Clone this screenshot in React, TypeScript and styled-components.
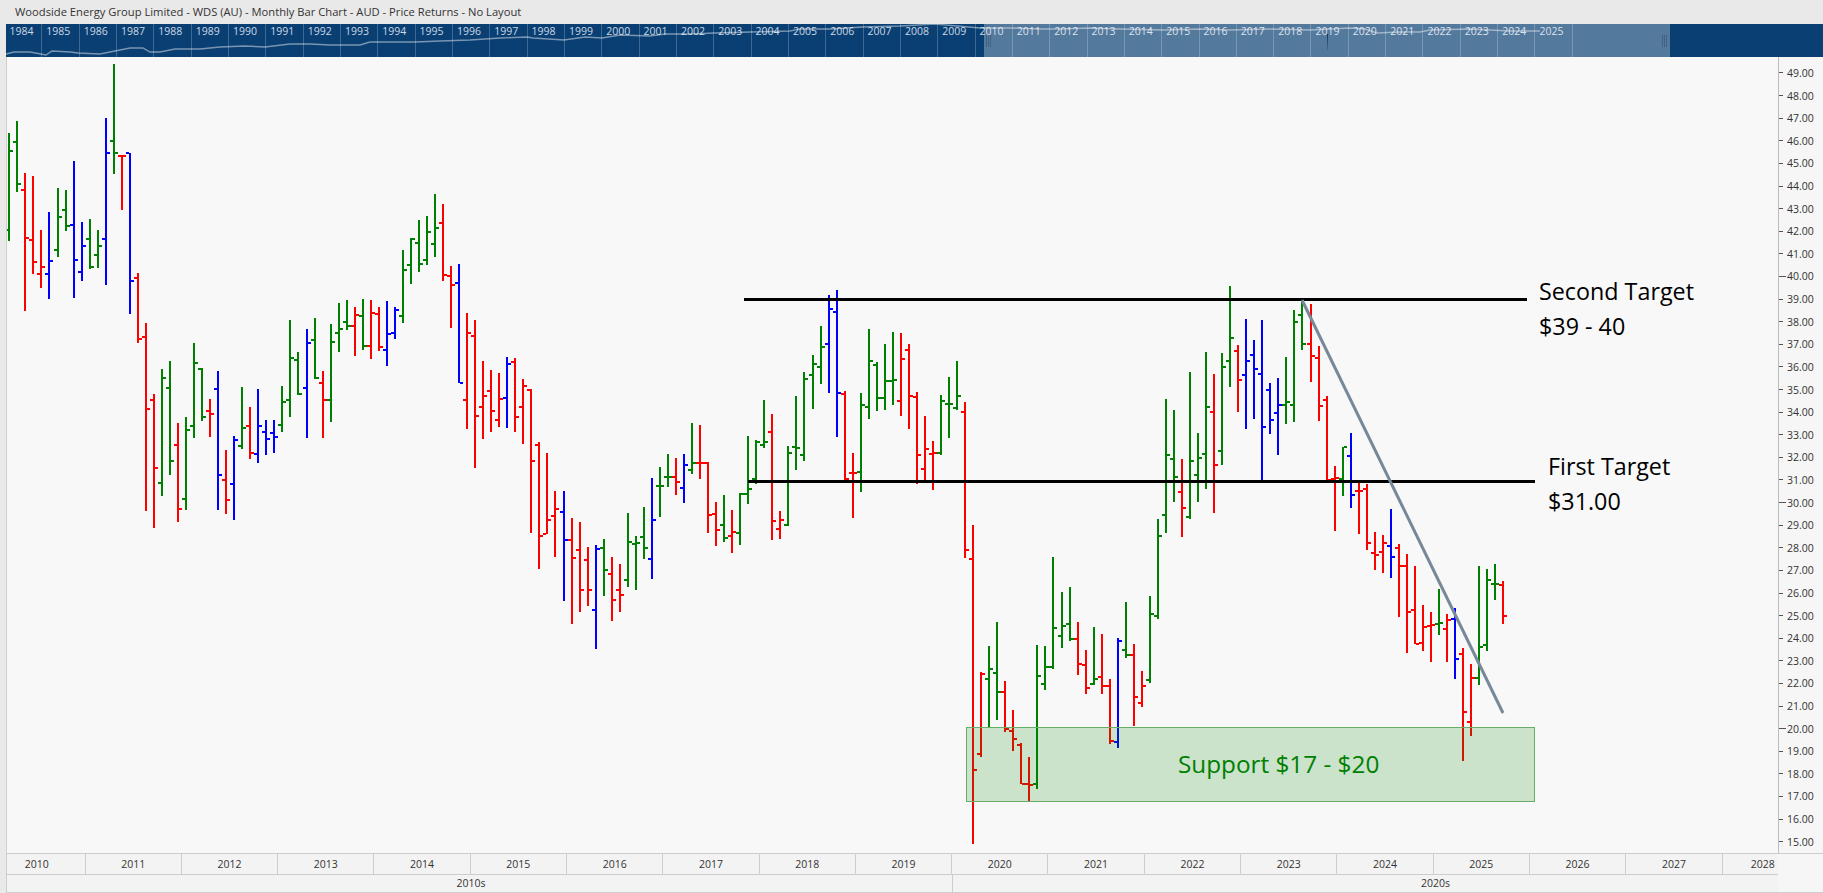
import React from "react";
import styled, { createGlobalStyle } from "styled-components";

// --- Data ---

type Bar = [color: "g" | "r" | "b", high: number, low: number, open: number, close: number];

// all y values are pixel rows of the page, one bar per month from March 2010
const BARS: Bar[] = [
  ["g",133,241,230,151],["g",121,192,142,184],["r",173,311,190,238],["r",176,274,240,262],["r",230,288,274,267],
  ["b",212,299,274,261],["g",188,257,250,217],["g",190,231,210,226],["b",161,298,225,260],["b",222,281,272,246],
  ["g",219,269,239,267],["g",230,268,255,246],["b",118,285,239,153],["g",64,174,141,153],["r",155,210,156,156],
  ["b",153,314,153,281],["r",273,343,278,339],["r",323,511,337,409],["r",394,528,400,468],["g",369,496,483,378],
  ["g",361,475,388,461],["r",423,522,445,509],["g",417,510,499,430],["g",343,438,426,363],["g",368,421,369,417],
  ["r",399,437,411,414],["b",371,510,389,475],["r",450,514,480,500],["b",436,520,484,440],["g",387,449,446,428],
  ["r",407,459,426,453],["b",389,463,454,426],["b",420,455,432,439],["b",420,453,433,437],["g",386,432,425,402],
  ["g",320,417,400,358],["g",352,395,360,394],["b",329,438,388,343],["g",318,379,340,378],["r",371,438,383,400],
  ["g",324,422,400,342],["g",303,352,333,329],["g",300,330,322,326],["r",307,356,326,315],["g",299,350,316,346],
  ["r",300,359,346,313],["r",307,351,314,347],["b",301,366,350,334],["b",307,339,333,310],["g",250,323,316,270],
  ["g",238,284,265,239],["g",220,272,243,264],["g",216,265,260,232],["g",194,257,244,228],["r",204,281,223,275],
  ["r",266,328,276,285],["b",264,383,283,383],["r",313,429,400,333],["r",320,468,336,416],["r",361,439,407,396],
  ["r",370,432,391,411],["r",373,427,420,399],["b",357,428,398,364],["r",358,432,362,417],["r",379,444,407,386],
  ["r",389,533,390,461],["r",442,569,445,536],["r",453,534,534,520],["r",491,557,516,509],["b",491,601,512,540],
  ["r",518,624,540,558],["r",522,612,550,590],["r",547,606,560,590],["b",545,649,610,549],["g",539,596,548,570],
  ["r",557,621,574,600],["r",564,612,590,595],["g",513,587,580,542],["g",536,590,544,543],["g",507,559,537,548],
  ["b",478,579,559,520],["g",467,517,486,486],["g",454,487,477,477],["r",458,495,477,482],["b",454,503,488,465],
  ["g",423,474,470,463],["r",425,479,463,463],["r",462,533,463,515],["r",502,546,514,530],["g",495,542,525,538],
  ["r",510,553,536,532],["g",493,545,533,494],["g",436,504,494,489],["g",440,484,479,442],["g",400,448,445,442],
  ["r",414,540,432,521],["r",511,539,529,520],["g",446,526,525,453],["g",396,470,447,448],["g",372,461,455,379],
  ["g",355,409,375,364],["g",326,384,367,347],["b",295,393,344,309],["b",290,437,312,393],["r",391,480,394,479],
  ["r",453,518,473,473],["g",393,492,472,405],["g",329,419,407,361],["g",362,411,365,398],["g",344,410,398,381],
  ["g",332,405,381,380],["r",333,416,401,359],["r",344,429,350,396],["r",392,484,397,455],["r",416,481,469,449],
  ["r",441,490,454,453],["g",395,455,453,401],["g",377,438,404,404],["g",361,410,408,396],["r",402,558,412,550],
  ["r",525,844,559,770],["r",672,757,754,674],["g",646,727,679,669],["g",622,720,673,692],["r",681,732,692,729],
  ["r",710,751,731,739],["r",743,784,745,784],["r",757,802,784,785],["g",645,789,784,676],["g",646,690,684,667],
  ["g",557,669,667,628],["g",592,648,636,626],["g",587,641,624,639],["r",622,675,639,664],["r",650,694,665,688],
  ["g",627,685,684,679],["r",634,694,677,686],["r",679,744,686,741],["b",638,748,742,641],["g",602,658,650,655],
  ["r",644,726,655,697],["r",671,707,703,686],["g",596,683,680,614],["g",519,619,616,536],["g",399,533,515,455],
  ["g",410,502,459,477],["r",459,537,492,508],["g",372,519,517,461],["g",433,502,475,458],["g",352,489,454,407],
  ["r",374,513,412,465],["g",353,465,451,367],["g",286,387,361,338],["r",345,412,351,380],["b",319,429,375,361],
  ["b",340,419,355,369],["b",320,480,374,427],["b",383,434,390,420],["b",378,455,413,405],["g",357,424,405,402],
  ["g",310,422,405,322],["g",301,350,315,344],["r",304,382,344,356],["r",346,421,358,406],["r",396,483,400,480],
  ["r",466,531,479,478],["g",447,496,479,447],["b",433,508,456,495],["r",483,534,491,491],["r",484,550,489,543],
  ["r",532,570,553,555],["r",535,573,552,543],["b",509,578,546,557],["r",544,617,548,566],["r",554,653,566,612],
  ["r",566,644,610,644],["r",605,651,643,627],["r",612,662,626,625],["g",589,635,624,623],["r",614,662,629,620],
  ["b",608,679,619,659],["r",648,761,654,712],["r",664,736,722,678],["g",566,685,678,647],["g",569,651,645,580],
  ["g",564,600,584,584],["r",581,624,585,616],
];

const COLORS = { g: "#008000", r: "#ff0000", b: "#0000ff" };

const NAV_YEARS = Array.from({ length: 42 }, (_, i) => 1984 + i);
const AXIS_YEARS = Array.from({ length: 19 }, (_, i) => 2010 + i);
const PRICES = Array.from({ length: 35 }, (_, i) => 49 - i);

const SPARK =
  "6,54 14,52 30,52 46,55 52,51 70,52 78,53 100,54 115,51 130,48 143,48 150,52 160,52 175,49 200,49 220,47 245,46 265,47 " +
  "290,44 310,44 330,45 360,45 370,42 415,42 440,41 470,40 500,38 527,37 533,38 564,40 585,37 602,38 620,35 650,36 665,34 " +
  "690,34 715,33 751,32 790,31 800,29 830,29 863,27 900,26 935,24 980,28 1012,28 1040,29 1060,29 1090,28 1120,29 1165,30 " +
  "1200,29 1230,30 1270,29 1310,30 1350,28 1365,29 1377,33 1400,32 1420,32 1430,30 1470,29 1490,30 1510,31 1540,31";

// --- Styled Components ---

const GlobalStyle = createGlobalStyle`
  html, body {
    margin: 0;
    padding: 0;
    background: #e9e9e9;
    overflow: hidden;
  }
  body {
    font-family: "Open Sans", "Liberation Sans", sans-serif;
    color: #333;
  }
`;

const Page = styled.div`
  width: 1823px;
  height: 893px;
  display: flex;
  flex-direction: column;
`;

const TitleBar = styled.div`
  flex: 0 0 24px;
  padding-left: 15px;
  font-size: 11.2px;
  line-height: 24px;
  color: #333;
  white-space: nowrap;
`;

const Body = styled.div`
  flex: 0 0 867px;
  padding-left: 6px;
  display: flex;
  flex-direction: column;
`;

const Navigator = styled.div`
  position: relative;
  flex: 0 0 33px;
  display: flex;
  background: #0a3f73;
  overflow: hidden;
`;

const NavYear = styled.div`
  flex: 0 0 37.33px;
  box-sizing: border-box;
  padding-left: 4px;
  border-right: 1px solid rgba(255, 255, 255, 0.22);
  font-size: 10.5px;
  line-height: 14px;
  color: #cbd8e4;

  &:first-child {
    flex-basis: 36.33px;
    padding-left: 3.4px;
  }
  &:last-of-type {
    border-right: none;
  }
`;

const Spark = styled.svg`
  position: absolute;
  inset: 0;
  width: 100%;
  height: 100%;
`;

const Selection = styled.div`
  position: absolute;
  top: 0;
  bottom: 0;
  left: 978px;
  width: 686px;
  background: rgba(255, 255, 255, 0.3);
`;

const Grip = styled.div<{ $side: "left" | "right" }>`
  position: absolute;
  top: 11px;
  height: 12px;
  width: 5px;
  ${(p) => (p.$side === "left" ? "left: 2px;" : "right: 3px;")}
  background: repeating-linear-gradient(
    90deg,
    rgba(40, 60, 85, 0.38) 0 1px,
    transparent 1px 2px
  );
`;

const CurrentMark = styled.div`
  position: absolute;
  top: 10px;
  left: 343px;
  width: 1px;
  height: 16px;
  background: linear-gradient(#1d3350, rgba(29, 51, 80, 0.25));
`;

const ChartRow = styled.div`
  flex: 0 0 795px;
  display: flex;
`;

const Plot = styled.div`
  position: relative;
  flex: 0 0 1772px;
  box-sizing: border-box;
  border-left: 1px solid #cfcfcf;
  background: #f8f8f8;
  overflow: hidden;
`;

const ChartSvg = styled.svg`
  display: block;
  width: 1771px;
  height: 795px;
`;

const Note = styled.div<{ $x: number; $y: number; $green?: boolean }>`
  position: absolute;
  left: ${(p) => p.$x}px;
  top: ${(p) => p.$y}px;
  font-size: ${(p) => (p.$green ? 24.3 : 23.3)}px;
  line-height: 35px;
  white-space: nowrap;
  color: ${(p) => (p.$green ? "#008000" : "#000")};
`;

const PriceAxis = styled.div`
  flex: 1;
  box-sizing: border-box;
  padding-top: 4.7px;
  border-left: 1px solid #bdbdbd;
  background: #f6f6f6;
  overflow: hidden;
`;

const PriceRow = styled.div`
  height: 22.62px;
  display: grid;
  grid-template-columns: 8px auto;
  align-items: center;
  font-size: 10.5px;
  color: #333;
`;

const PriceTick = styled.span<{ $major: boolean }>`
  display: block;
  height: 1px;
  width: ${(p) => (p.$major ? 7 : 4)}px;
  background: #555;
`;

const TimeAxis = styled.div`
  flex: 0 0 39px;
  box-sizing: border-box;
  border-top: 1px solid #cdcdcd;
  border-bottom: 1px solid #cdcdcd;
  border-left: 1px solid #cdcdcd;
  background: #f6f6f6;
  font-size: 10.5px;
  color: #333;
`;

const AxisRow = styled.div<{ $lined?: boolean }>`
  width: 1771px;
  height: ${(p) => (p.$lined ? 20 : 17)}px;
  display: flex;
  background: #f3f3f3;
  ${(p) => p.$lined && "border-bottom: 1px solid #cdcdcd;"}
`;

const YearCell = styled.div`
  flex: 0 0 96.31px;
  box-sizing: border-box;
  border-right: 1px solid #cdcdcd;
  text-align: center;
  line-height: 20px;

  &:first-child {
    flex-basis: 78.5px;
    padding-right: 18px;
  }
  &:last-child {
    flex: 1;
    border-right: none;
    padding-left: 25px;
  }
`;

const DecadeCell = styled.div<{ $width: number; $shift: number }>`
  flex: 0 0 ${(p) => p.$width}px;
  box-sizing: border-box;
  padding-left: ${(p) => Math.max(p.$shift, 0)}px;
  padding-right: ${(p) => Math.max(-p.$shift, 0)}px;
  text-align: center;
  line-height: 17px;

  & + & {
    border-left: 1px solid #cdcdcd;
  }
`;

// --- Parts ---

const barX = (i: number) => Math.floor(9.82 + 8.032 * i);

const Bars = () => (
  <>
    {BARS.map(([c, high, low, open, close], i) => {
      const x = barX(i);
      return (
        <g key={i} fill={COLORS[c]}>
          <rect x={x - 1} y={high} width={2} height={low - high} />
          <rect x={x - 4} y={open - 1} width={3} height={2} />
          <rect x={x + 1} y={close - 1} width={3} height={2} />
        </g>
      );
    })}
  </>
);

export default function App() {
  return (
    <>
      <GlobalStyle />
      <Page>
        <TitleBar>
          Woodside Energy Group Limited - WDS (AU) - Monthly Bar Chart - AUD - Price Returns - No Layout
        </TitleBar>
        <Body>
          <Navigator>
            {NAV_YEARS.map((y) => (
              <NavYear key={y}>{y}</NavYear>
            ))}
            <Spark viewBox="6 24 1817 33">
              <polyline points={SPARK} fill="none" stroke="rgba(255,255,255,0.45)" strokeWidth={1.4} />
            </Spark>
            <Selection>
              <Grip $side="left" />
              <CurrentMark />
              <Grip $side="right" />
            </Selection>
          </Navigator>
          <ChartRow>
            <Plot>
              <ChartSvg viewBox="7 57 1771 795">
                <g shapeRendering="crispEdges">
                  <Bars />
                  <rect
                    x={966.5}
                    y={727.5}
                    width={568}
                    height={74}
                    fill="rgba(0,128,0,0.18)"
                    stroke="#66ae66"
                    strokeWidth={1}
                  />
                  <rect x={744} y={298} width={783} height={3} fill="#000" />
                  <rect x={748} y={480} width={787} height={3} fill="#000" />
                </g>
                <line x1={1302} y1={300} x2={1503} y2={713} stroke="#778899" strokeWidth={3} />
              </ChartSvg>
              <Note $x={1532} $y={217}>
                Second Target
                <br />
                $39 - 40
              </Note>
              <Note $x={1541} $y={392}>
                First Target
                <br />
                $31.00
              </Note>
              <Note $x={1171} $y={689} $green>
                Support $17 - $20
              </Note>
            </Plot>
            <PriceAxis>
              {PRICES.map((p) => (
                <PriceRow key={p}>
                  <PriceTick $major={p % 10 === 0} />
                  <span>{p.toFixed(2)}</span>
                </PriceRow>
              ))}
            </PriceAxis>
          </ChartRow>
          <TimeAxis>
            <AxisRow $lined>
              {AXIS_YEARS.map((y) => (
                <YearCell key={y}>{y}</YearCell>
              ))}
            </AxisRow>
            <AxisRow>
              <DecadeCell $width={945} $shift={-17}>
                2010s
              </DecadeCell>
              <DecadeCell $width={826} $shift={140}>
                2020s
              </DecadeCell>
            </AxisRow>
          </TimeAxis>
        </Body>
      </Page>
    </>
  );
}
